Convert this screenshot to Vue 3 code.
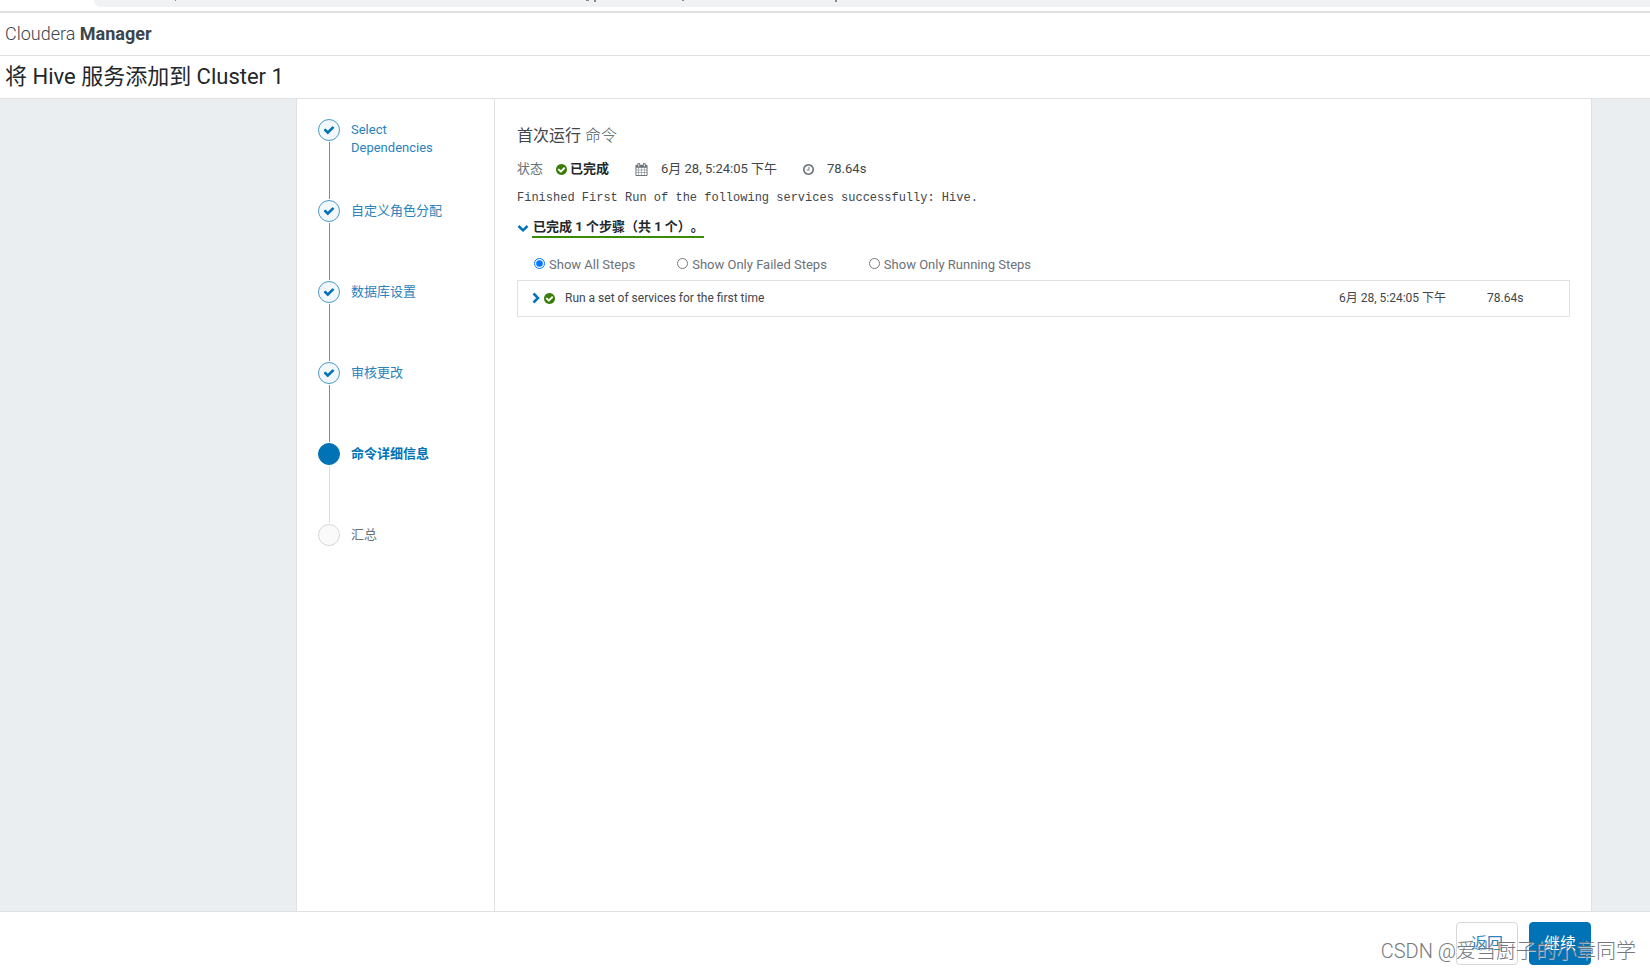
<script setup>
import { ref } from 'vue'

const steps = [
  { label: 'Select Dependencies', state: 'done' },
  { label: '自定义角色分配', state: 'done' },
  { label: '数据库设置', state: 'done' },
  { label: '审核更改', state: 'done' },
  { label: '命令详细信息', state: 'current' },
  { label: '汇总', state: 'pending' },
]

const filters = [
  { value: 'all', label: 'Show All Steps' },
  { value: 'failed', label: 'Show Only Failed Steps' },
  { value: 'running', label: 'Show Only Running Steps' },
]
const filter = ref('all')

const checkCircle =
  'M1284 734q0-28-18-46l-91-90q-19-19-45-19t-45 19l-408 407-226-226q-19-19-45-19t-45 19l-91 90q-18 18-18 46 0 27 18 45l362 362q19 19 45 19 27 0 46-19l543-543q18-18 18-45zm252 162q0 209-103 385.500t-279.500 279.500-385.500 103-385.500-103-279.500-279.500-103-385.500 103-385.500 279.500-279.500 385.500-103 385.500 103 279.500 279.500 103 385.500z'
</script>

<template>
  <div class="page">
    <div class="browser-bar">
      <div class="address">
        <svg width="100%" height="7" aria-hidden="true">
          <g fill="#85878f">
            <rect x="81" y="0" width="1" height="1" />
            <rect x="492" y="0" width="3" height="1" />
            <rect x="500" y="0" width="2" height="2" />
            <rect x="588" y="0" width="2" height="1" />
            <rect x="741" y="0" width="2" height="2" />
          </g>
        </svg>
      </div>
    </div>

    <header class="brand">Cloudera&nbsp;<strong>Manager</strong></header>
    <h1 class="title">将 Hive 服务添加到 Cluster 1</h1>

    <main class="stage">
      <div class="panel">
        <nav class="wizard" aria-label="Steps">
          <ol>
            <li v-for="step in steps" :key="step.label" :class="step.state">
              <span class="dot">
                <svg v-if="step.state === 'done'" width="12" height="12" viewBox="0 0 1792 1792">
                  <path fill="#0073b7" d="M1671 566q0 40-28 68l-724 724-136 136q-28 28-68 28t-68-28l-136-136-362-362q-28-28-28-68t28-68l136-136q28-28 68-28t68 28l294 295 656-657q28-28 68-28t68 28l136 136q28 28 28 68z" />
                </svg>
              </span>
              <a v-if="step.state === 'done'" href="#" class="label">{{ step.label }}</a>
              <span v-else class="label">{{ step.label }}</span>
            </li>
          </ol>
        </nav>

        <section class="content">
          <h2>首次运行 <small>命令</small></h2>

          <div class="status">
            <span class="muted">状态</span>
            <span class="state">
              <svg width="11" height="11" viewBox="0 128 1536 1536"><path fill="#3c7d0a" :d="checkCircle" /></svg>
              <strong>已完成</strong>
            </span>
            <span class="meta">
              <svg width="13" height="13" viewBox="0 0 1664 1792">
                <path fill="#6b7278" d="M128 1664h288v-288h-288v288zm352 0h320v-288h-320v288zm-352-352h288v-320h-288v320zm352 0h320v-320h-320v320zm-352-384h288v-288h-288v288zm736 736h320v-288h-320v288zm-384-736h320v-288h-320v288zm768 736h288v-288h-288v288zm-384-352h320v-320h-320v320zm-352-864v-288q0-13-9.500-22.500t-22.500-9.500h-64q-13 0-22.500 9.500t-9.500 22.500v288q0 13 9.500 22.500t22.500 9.500h64q13 0 22.500-9.500t9.500-22.500zm736 864h288v-320h-288v320zm-384-384h320v-288h-320v288zm384 0h288v-288h-288v288zm32-480v-288q0-13-9.500-22.500t-22.500-9.500h-64q-13 0-22.500 9.500t-9.500 22.500v288q0 13 9.500 22.500t22.500 9.500h64q13 0 22.500-9.500t9.500-22.500zm384-64v1280q0 52-38 90t-90 38h-1408q-52 0-90-38t-38-90v-1280q0-52 38-90t90-38h128v-96q0-66 47-113t113-47h64q66 0 113 47t47 113v96h384v-96q0-66 47-113t113-47h64q66 0 113 47t47 113v96h128q52 0 90 38t38 90z" />
              </svg>
              6月 28, 5:24:05 下午
            </span>
            <span class="meta">
              <svg width="11" height="11" viewBox="0 128 1536 1536">
                <path fill="#6b7278" d="M896 544v448q0 14-9 23t-23 9h-320q-14 0-23-9t-9-23v-64q0-14 9-23t23-9h224v-352q0-14 9-23t23-9h64q14 0 23 9t9 23zm416 352q0-148-73-273t-198-198-273-73-273 73-198 198-73 273 73 273 198 198 273 73 273-73 198-198 73-273zm224 0q0 209-103 385.500t-279.500 279.500-385.500 103-385.500-103-279.500-279.500-103-385.500 103-385.500 279.500-279.500 385.500-103 385.500 103 279.500 279.500 103 385.500z" />
              </svg>
              78.64s
            </span>
          </div>

          <p class="message">Finished First Run of the following services successfully: Hive.</p>

          <button type="button" class="toggle">
            <svg width="12" height="12" viewBox="0 0 12 12"><path d="M1.500 4L6 8.300L10.500 4" fill="none" stroke="#0073b7" stroke-width="2.500" /></svg>
            <span>已完成 1 个步骤（共 1 个）。</span>
          </button>

          <div class="filters" role="radiogroup" aria-label="Steps">
            <label v-for="f in filters" :key="f.value">
              <input v-model="filter" type="radio" name="step-filter" :value="f.value" />
              <span>{{ f.label }}</span>
            </label>
          </div>

          <table>
            <tbody>
              <tr>
                <td class="name">
                  <div class="cell">
                    <button type="button" class="expand" aria-label="Expand">
                      <svg width="8" height="12" viewBox="0 0 8 12"><path d="M1.500 1.500L6 6L1.500 10.500" fill="none" stroke="#0073b7" stroke-width="2.500" /></svg>
                    </button>
                    <svg width="11" height="11" viewBox="0 128 1536 1536"><path fill="#3c7d0a" :d="checkCircle" /></svg>
                    <span class="command">Run a set of services for the first time</span>
                  </div>
                </td>
                <td class="time">6月 28, 5:24:05 下午</td>
                <td class="duration">78.64s</td>
              </tr>
            </tbody>
          </table>
        </section>
      </div>
    </main>

    <footer class="actions">
      <button type="button" class="btn">返回</button>
      <button type="button" class="btn primary">继续</button>
      <span class="watermark">CSDN @爱当厨子的小章同学</span>
    </footer>
  </div>
</template>

<style>
body {
  margin: 0;
  background: #fff;
}
</style>

<style scoped>
.page {
  display: flex;
  flex-direction: column;
  min-height: 100vh;
  font-family: Roboto, "Noto Sans CJK SC", sans-serif;
  font-size: 13px;
  line-height: 18px;
  color: #40464c;
}
button {
  font: inherit;
  color: inherit;
  border: 0;
  padding: 0;
  background: none;
  cursor: pointer;
}
svg {
  display: block;
  flex: none;
}
.browser-bar {
  height: 11px;
  padding-left: 94px;
  border-bottom: 2px solid #dfe0e1;
}
.address {
  height: 7px;
  background: #f1f2f4;
  border-bottom-left-radius: 12px;
}
.brand {
  padding: 10px 5px 11px;
  font-size: 18px;
  line-height: 21px;
  font-weight: 300;
  color: #3c454d;
  border-bottom: 1px solid #dfe1e2;
}
.brand strong {
  font-weight: 700;
}
.title {
  margin: 0;
  padding: 7px 5px;
  font-size: 22px;
  line-height: 28px;
  font-weight: 400;
  color: #22272b;
  border-bottom: 1px solid #dfe1e2;
}
.stage {
  flex: 1;
  display: flex;
  padding: 0 58px 0 296px;
  background: #eaeef1;
}
.panel {
  flex: 1;
  display: flex;
  background: #fff;
  border: solid #dfe1e2;
  border-width: 0 1px;
}
.wizard {
  flex: none;
  width: 198px;
  box-sizing: border-box;
  border-right: 1px solid #dfe1e2;
}
.wizard ol {
  margin: 0;
  padding: 20px 40px 0 21px;
  list-style: none;
}
.wizard li {
  position: relative;
  display: flex;
  gap: 11px;
  height: 81px;
}
.wizard li:last-child {
  height: 22px;
}
.wizard li:not(:last-child)::after {
  content: "";
  position: absolute;
  left: 11px;
  top: 23px;
  bottom: 1px;
  width: 1px;
  background: #4a9bcb;
}
.wizard li.current::after {
  background: #dcdddf;
}
.dot {
  flex: none;
  display: flex;
  align-items: center;
  justify-content: center;
  box-sizing: border-box;
  width: 22px;
  height: 22px;
  border: 1px solid #4a9bcb;
  border-radius: 50%;
  background: #f3f8fd;
}
.current .dot {
  border-color: #0073b7;
  background: #0073b7;
}
.pending .dot {
  border-color: #d5d7d9;
  background: #fafafa;
}
.label {
  padding-top: 2px;
  color: #2a83bd;
  text-decoration: none;
}
.current .label {
  font-weight: 700;
  color: #0073b7;
}
.pending .label {
  color: #6b7278;
}
.content {
  flex: 1;
  min-width: 0;
  padding: 25px 21px 0 22px;
}
h2 {
  margin: 0 0 12px;
  font-size: 16px;
  line-height: 24px;
  font-weight: 400;
}
h2 small {
  font-size: 16px;
  font-weight: 300;
  color: #50575d;
}
.status {
  display: flex;
  align-items: center;
  margin-bottom: 11px;
}
.muted {
  width: 39px;
  color: #6b7278;
}
.state {
  display: flex;
  align-items: center;
  gap: 3px;
  color: #22272b;
}
.meta {
  display: flex;
  align-items: center;
  gap: 13px;
  margin-left: 26px;
}
.message {
  margin: 0 0 11px;
  font-family: "Liberation Mono", monospace;
  font-size: 12px;
}
.toggle {
  display: flex;
  align-items: center;
  gap: 3px;
  font-weight: 700;
  color: #22272b;
}
.toggle span {
  padding-left: 1px;
  border-bottom: 2px solid #3c8a0a;
  text-spacing-trim: space-all;
}
.filters {
  display: flex;
  gap: 42px;
  margin: 18px 0 6px 17px;
  color: #6b7278;
}
.filters label {
  display: flex;
  gap: 4px;
}
.filters input {
  width: 11px;
  height: 11px;
  margin: 2px 0 0;
}
table {
  width: 100%;
  border-collapse: collapse;
  border: 1px solid #dfe1e2;
  font-size: 12px;
}
td {
  padding: 8px 0 9px;
}
.cell {
  display: flex;
  align-items: center;
  gap: 4px;
  padding-left: 14px;
}
.command {
  margin-left: 6px;
}
.time {
  width: 148px;
}
.duration {
  width: 82px;
}
.actions {
  position: relative;
  display: flex;
  justify-content: flex-end;
  gap: 11px;
  padding: 10px 59px 5px;
  border-top: 1px solid #dfe1e2;
}
.btn {
  box-sizing: border-box;
  height: 43px;
  padding: 0 14px;
  font-size: 16px;
  color: #2a83bd;
  border: 1px solid #d5d7d9;
  border-radius: 4px;
  background: #fff;
}
.btn.primary {
  color: #fff;
  border-color: #0073b7;
  background: #0073b7;
}
.watermark {
  position: absolute;
  right: 14px;
  bottom: 7px;
  font-size: 20px;
  line-height: 24px;
  font-weight: 300;
  color: #75787b;
  text-shadow: 1px 1px 0 rgba(255, 255, 255, 0.6);
  white-space: nowrap;
  pointer-events: none;
}
</style>
